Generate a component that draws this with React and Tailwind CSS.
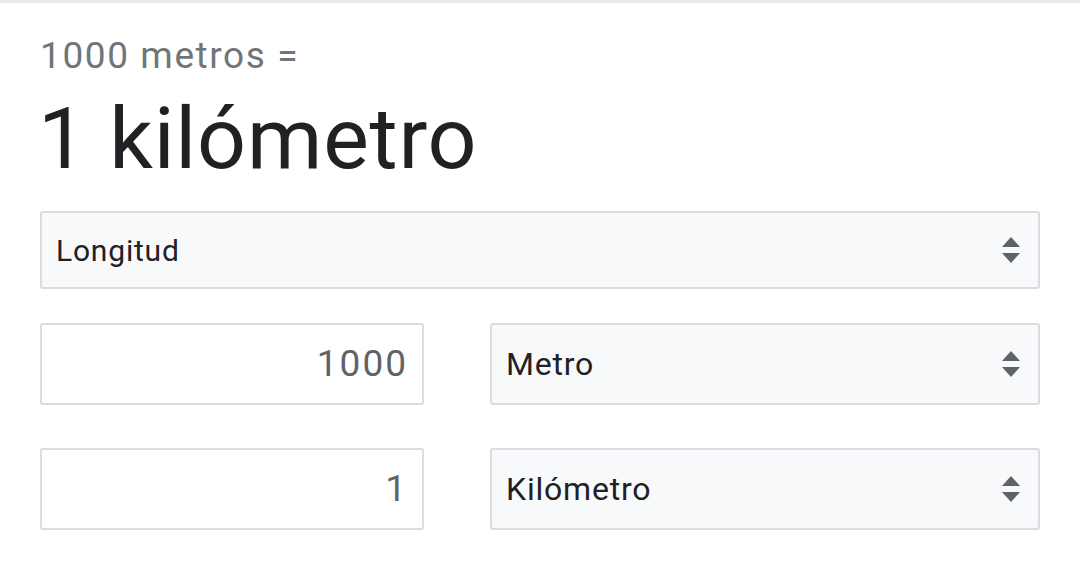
import React from 'react';

function Flechas() {
  return (
    <svg width="20" height="30" viewBox="0 0 20 30" className="shrink-0">
      <path d="M10 2 L19 12 H1 Z" fill="#5f6368" />
      <path d="M10 28 L19 18 H1 Z" fill="#5f6368" />
    </svg>
  );
}

function Selector({ valor, className }) {
  return (
    <div className={`flex items-center justify-between bg-[#f8f9fa] border-2 border-[#dadce0] rounded-[3px] pl-[14px] pr-[17px] tracking-[0.8px] ${className}`}>
      <span className="text-[#202124]">{valor}</span>
      <Flechas />
    </div>
  );
}

function Entrada({ valor }) {
  return (
    <div className="w-[384px] h-[82px] flex items-center justify-end bg-white border-2 border-[#dadce0] rounded-[3px] pr-[14px] text-[37px] tracking-[2px] text-[#5f6368]">
      {valor}
    </div>
  );
}

export default function App() {
  return (
    <div className="w-[1080px] h-[565px] bg-white border-t-[3px] border-[#e8eaed] font-['Roboto',sans-serif] overflow-hidden">
      <div className="pl-[40px] pt-[30px]">
        <div className="text-[37px] leading-[46px] tracking-[1.6px] text-[#70757a]">1000 metros =</div>
        <div className="text-[86px] leading-[100px] tracking-[0.8px] text-[#202124] -ml-[2px] mt-[10px]">1 kilómetro</div>

        <Selector valor="Longitud" className="w-[1000px] h-[78px] mt-[22px] text-[30px]" />

        <div className="flex gap-[66px] mt-[34px]">
          <Entrada valor="1000" />
          <Selector valor="Metro" className="w-[550px] h-[82px] text-[32px]" />
        </div>
        <div className="flex gap-[66px] mt-[43px]">
          <Entrada valor="1" />
          <Selector valor="Kilómetro" className="w-[550px] h-[82px] text-[32px]" />
        </div>
      </div>
    </div>
  );
}
